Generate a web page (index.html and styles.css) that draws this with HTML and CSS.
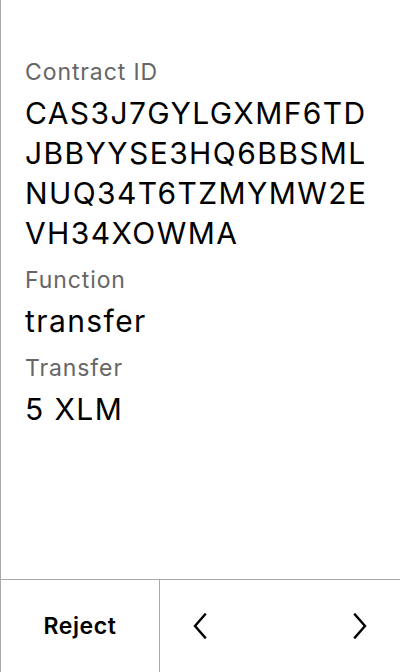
FILE: index.html
```html
<!DOCTYPE html>
<html>
<head>
<meta charset="utf-8">
<link rel="stylesheet" href="styles.css">
</head>
<body>
<div class="screen">
  <main class="content">
    <div class="field">
      <div class="label">Contract ID</div>
      <div class="value">CAS3J7GYLGXMF6TD<br>JBBYYSE3HQ6BBSML<br>NUQ34T6TZMYMW2E<br>VH34XOWMA</div>
    </div>
    <div class="field">
      <div class="label">Function</div>
      <div class="value">transfer</div>
    </div>
    <div class="field">
      <div class="label">Transfer</div>
      <div class="value">5 XLM</div>
    </div>
  </main>
  <footer class="actions">
    <div class="btn reject">Reject</div>
    <div class="btn nav">
      <svg width="14" height="26" viewBox="0 0 14 26"><path d="M12 1.5 L2 13 L12 24.5" fill="none" stroke="#000" stroke-width="2.4" stroke-linecap="square"/></svg>
    </div>
    <div class="btn spacer"></div>
    <div class="btn nav">
      <svg width="14" height="26" viewBox="0 0 14 26"><path d="M2 1.5 L12 13 L2 24.5" fill="none" stroke="#000" stroke-width="2.4" stroke-linecap="square"/></svg>
    </div>
  </footer>
</div>
</body>
</html>
```

FILE: styles.css
```css
html, body {
  margin: 0;
  padding: 0;
  background: #fff;
}
body {
  font-family: Inter, "Liberation Sans", sans-serif;
  color: #000;
}
.screen {
  width: 400px;
  height: 672px;
  box-sizing: border-box;
  border-left: 1px solid #aaa;
  display: flex;
  flex-direction: column;
}
.content {
  flex: 1;
  padding: 57px 24px 0 24px;
  display: flex;
  flex-direction: column;
  gap: 12px;
}
.field {
  display: flex;
  flex-direction: column;
  gap: 6px;
}
.label {
  font-size: 23px;
  line-height: 30px;
  letter-spacing: 0.9px;
  color: #666;
}
.value {
  font-size: 30px;
  line-height: 40px;
  letter-spacing: 1.4px;
}
.actions {
  height: 92px;
  border-top: 1px solid #aaa;
  display: grid;
  grid-template-columns: 159px 80px 80px 80px;
}
.btn {
  display: flex;
  align-items: center;
  justify-content: center;
}
.reject {
  font-size: 23px;
  font-weight: 600;
  letter-spacing: 0.6px;
  border-right: 1px solid #aaa;
}
```
